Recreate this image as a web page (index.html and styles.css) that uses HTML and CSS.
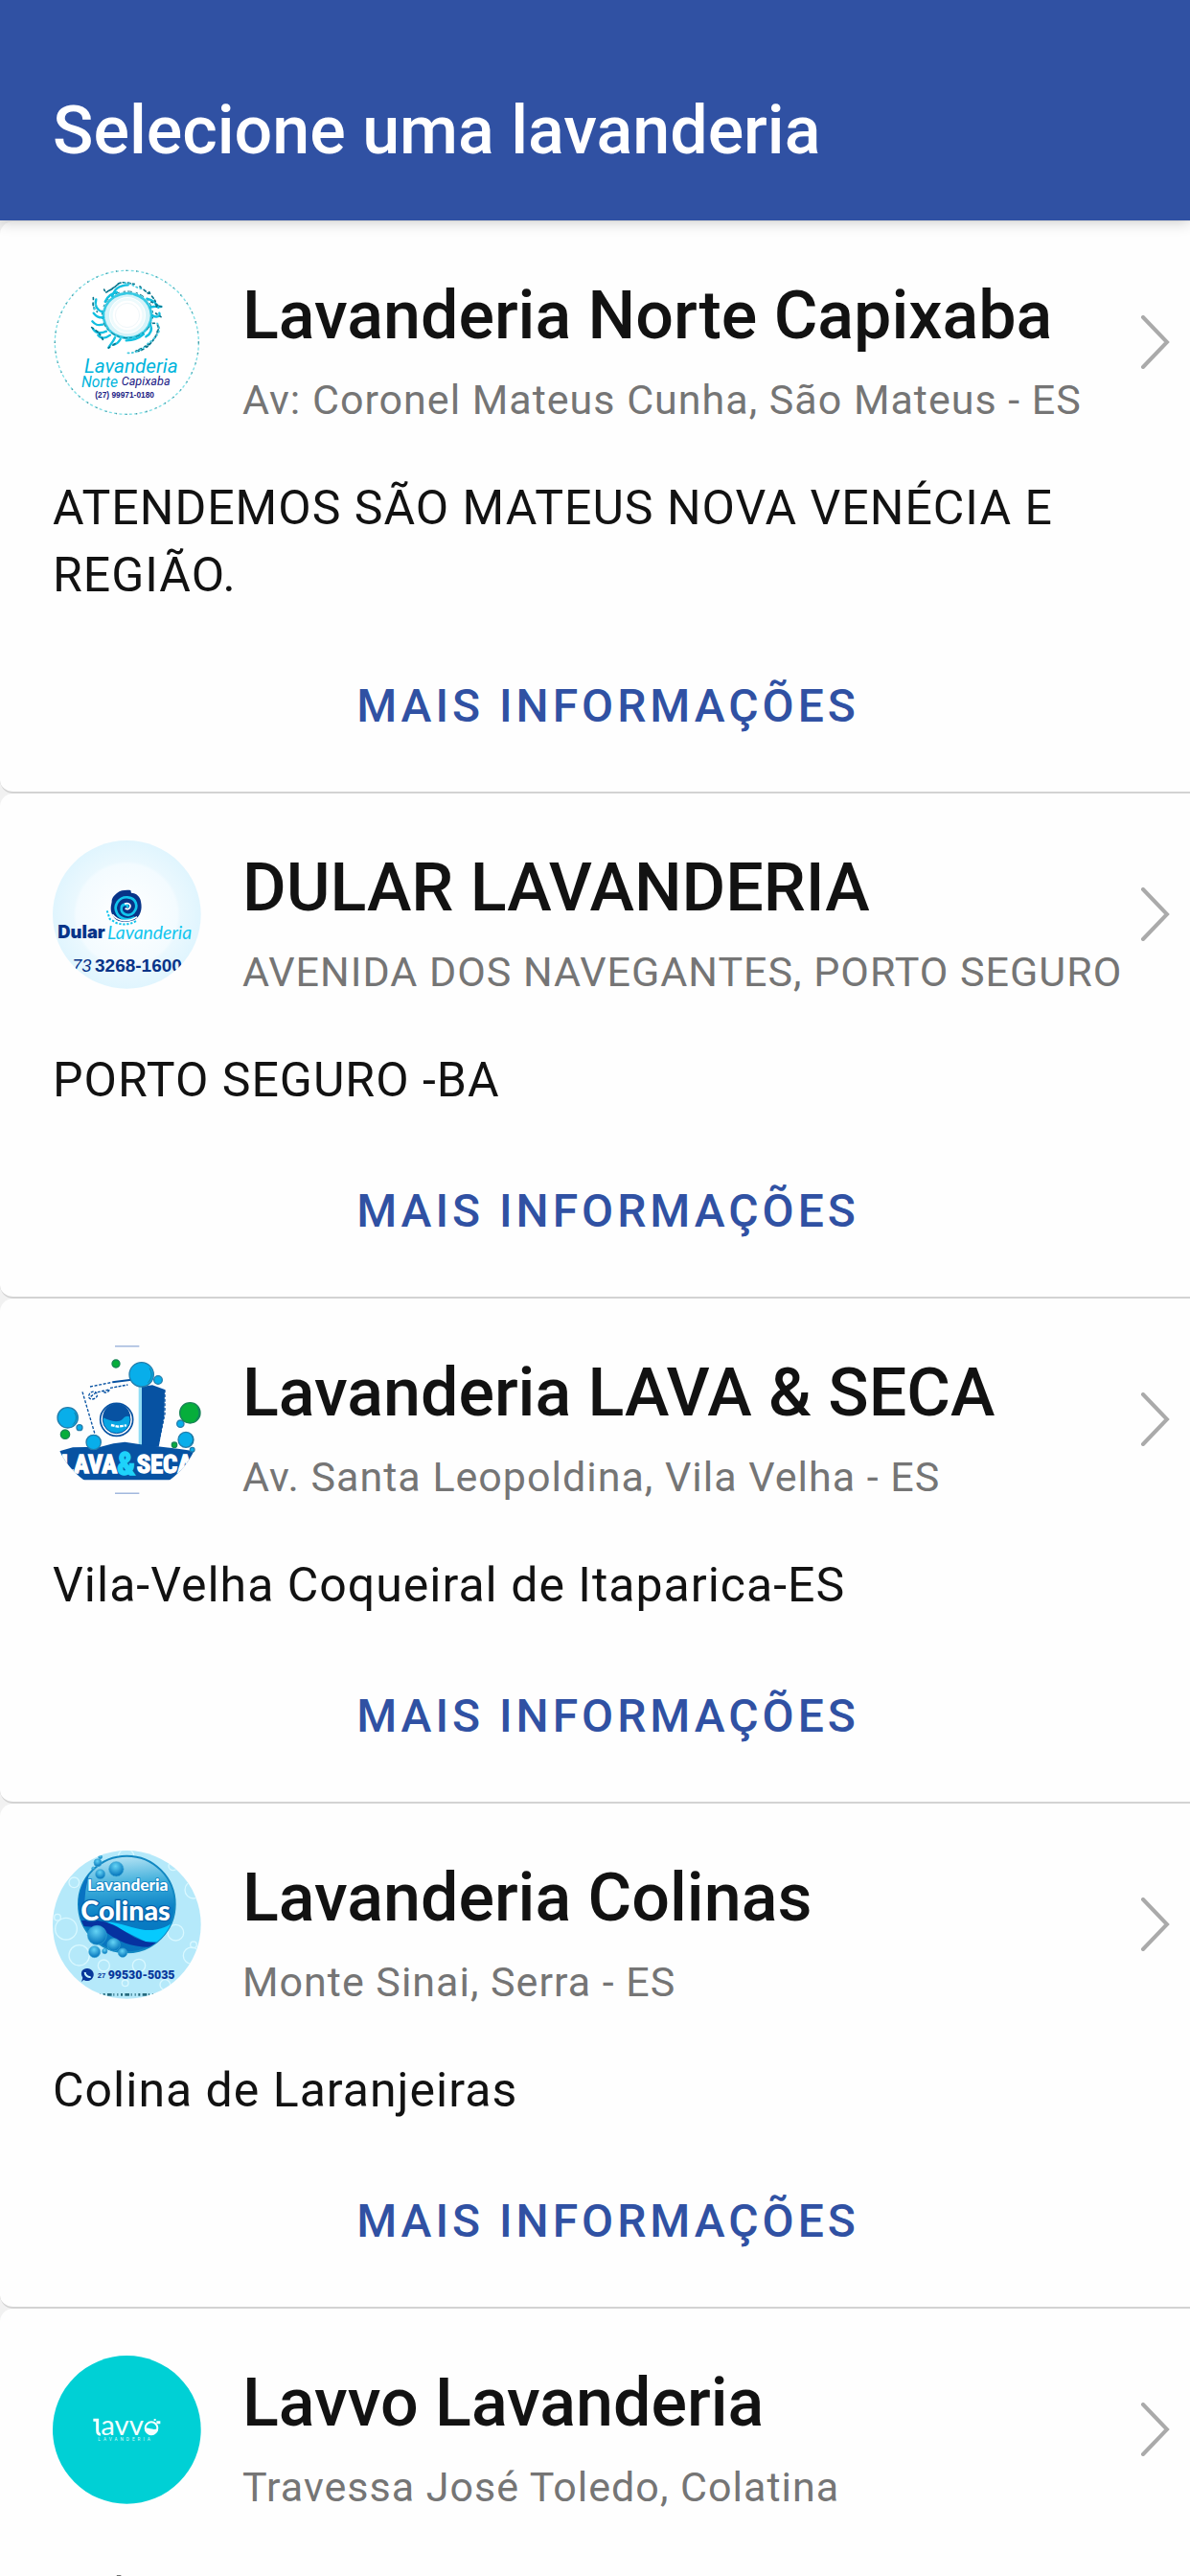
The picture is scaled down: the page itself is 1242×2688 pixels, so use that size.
FILE: index.html
```html
<!DOCTYPE html>
<html lang="pt-BR">
<head>
  <meta charset="UTF-8">
  <meta name="viewport" content="width=device-width, initial-scale=1.0">
  <title>Selecione uma lavanderia</title>
  <link rel="stylesheet" href="styles.css">
</head>
<body>
<header class="topbar">
  <h1>Selecione uma lavanderia</h1>
</header>

<main class="list">

  <article class="card">
    <a class="row" href="#norte-capixaba">
      <svg class="avatar" viewBox="45 33 465 465" aria-hidden="true">
        <circle cx="277" cy="265" r="225" fill="#fff" stroke="#7fdfe6" stroke-width="4" stroke-dasharray="9 7"/>
        <circle cx="277" cy="265" r="225" fill="none" stroke="#4b9aa5" stroke-width="4" stroke-dasharray="4 28"/>
        <g fill="none" stroke-linecap="round">
          <circle cx="279" cy="180" r="64" stroke="#d5f3f9" stroke-width="14"/>
          <circle cx="279" cy="180" r="50" stroke="#eefafc" stroke-width="8"/>
          <circle cx="279" cy="180" r="38" stroke="#f0f7fa" stroke-width="3"/>
          <ellipse cx="279" cy="181" rx="75" ry="70" stroke="#35c9e3" stroke-width="8" stroke-dasharray="34 3 18 5"/>
          <ellipse cx="279" cy="178" rx="80" ry="73" stroke="#087b91" stroke-width="3" stroke-dasharray="12 14 5 9"/>
          <path stroke="#11bfe0" stroke-width="7" d="M232 121c5-24 25-35 49-36M209 137c9-18 20-26 37-29M201 170c-20-8-25-22-20-40M204 187c-17 2-24-5-31-14M202 209c-17 3-24 1-33-10M213 230c-20 9-33 6-42-8M225 242c-17 13-29 11-38 0M240 250c-8 18-15 20-20 31M257 255c-8 14-14 15-21 17M330 239c-18 16-33 20-55 20M351 209c8 20 0 30-14 38M357 181c14 7 26 3 22-8M340 128c19 5 30 12 36 28M352 155c14-5 19-2 33-2"/>
          <path stroke="#08758d" stroke-width="5" stroke-dasharray="5 11 8 7" d="M212 108c22-10 32-20 38-27 21-10 41 3 55 1M206 99c5 17 24-3 45-17M172 125c2 15-8 24 12 44M167 218c15 11 24 14 35 38M347 107c9 19 22 21 23 47M353 138c11 4 15 10 33 15M359 205c21-3 21 23 7 42-12 21-28 40-54 45M373 229c-6 37-38 48-77 68M368 174l16 11M220 282l25-16M318 90l27 22"/>
          <path stroke="#43c9df" stroke-width="5" stroke-dasharray="4 9" d="M270 79c22-1 32 15 54 18M372 205c20 24-8 49-30 64M280 298c25 0 40-8 57-22M180 145l-8 22"/>
        </g>
        <text class="logo-slim" x="144" y="361" font-size="62" fill="#00b4dc">Lavanderia</text>
        <text class="logo-slim" x="135" y="404" font-size="47" fill="#00b4dc">Norte</text>
        <text class="logo-slim" x="260" y="398" font-size="38" fill="#1c1b85">Capixaba</text>
        <text class="logo-bold" x="178" y="439" font-size="25" fill="#1c1b85">(27) 99971-0180</text>
      </svg>
      <div class="info">
        <h2>Lavanderia Norte Capixaba</h2>
        <p>Av: Coronel Mateus Cunha, São Mateus - ES</p>
      </div>
      <svg class="chevron" viewBox="0 0 32 56" aria-hidden="true"><path d="M3 2l25 26L3 54"/></svg>
    </a>
    <p class="about">ATENDEMOS SÃO MATEUS NOVA VENÉCIA E REGIÃO.</p>
    <button class="more" type="button">MAIS INFORMAÇÕES</button>
  </article>

  <article class="card">
    <a class="row" href="#dular">
      <svg class="avatar" viewBox="45 50 465 465" aria-hidden="true">
        <defs>
          <radialGradient id="dular-bg" cx=".5" cy=".5" r=".5">
            <stop offset="0" stop-color="#fff"/>
            <stop offset=".68" stop-color="#f3fbff"/>
            <stop offset=".72" stop-color="#eaf8fe"/>
            <stop offset="1" stop-color="#e0f5fe"/>
          </radialGradient>
          <clipPath id="dular-clip"><circle cx="277" cy="282" r="232"/></clipPath>
        </defs>
        <circle cx="277" cy="282" r="232" fill="url(#dular-bg)"/>
        <path fill="#083488" d="M246 215c13-10 28-10 43-9l2 8c16 1 28 11 30 27 6 26-3 47-20 58l-20 5c-25 4-44-5-51-25-6-18-1-29 0-37-1-11 7-19 16-27z"/>
        <path fill="none" stroke="#12c5ed" stroke-width="8" stroke-linecap="round" d="M280 258c-2-11-19-10-20 4-2 19 24 29 38 14 17-19 8-46-17-48-29-3-47 26-35 49 9 19 34 25 53 15"/>
        <path fill="none" stroke="#fff" stroke-width="5" d="M270 249c9-5 19-1 18 8-1 7-10 11-16 5M232 282c18 24 53 24 77 7"/>
        <path fill="none" stroke="#12c5ed" stroke-width="6" stroke-dasharray="7 5" d="M215 270l9 26 20 12c22 8 43 5 63-6"/>
        <text class="logo-black" x="61" y="357" font-size="55" fill="#083488">Dular</text>
        <text class="logo-script" x="216" y="360" font-size="58" fill="#12c5ed">Lavanderia</text>
        <g clip-path="url(#dular-clip)" fill="#083488">
          <text class="logo-italic" x="106" y="460" font-size="54">73</text>
          <text class="logo-bold" x="177" y="460" font-size="57">3268-1600</text>
        </g>
      </svg>
      <div class="info">
        <h2>DULAR LAVANDERIA</h2>
        <p>AVENIDA DOS NAVEGANTES, PORTO SEGURO</p>
      </div>
      <svg class="chevron" viewBox="0 0 32 56" aria-hidden="true"><path d="M3 2l25 26L3 54"/></svg>
    </a>
    <p class="about">PORTO SEGURO -BA</p>
    <button class="more" type="button">MAIS INFORMAÇÕES</button>
  </article>

  <article class="card">
    <a class="row" href="#lava-seca">
      <svg class="avatar" viewBox="45 41 465 465" aria-hidden="true">
        <defs><clipPath id="seca-clip"><circle cx="277" cy="273" r="232"/></clipPath></defs>
        <path stroke="#a2b8dd" stroke-width="5" d="M240 43h76M240 504h76"/>
        <path fill="#0752a2" d="M324 170l33-5 39 14-2 84-17 95h-53z"/>
        <path fill="#8fdcf4" d="M314 168h10v186h-10z"/>
        <path fill="none" stroke="#0752a2" stroke-width="4" stroke-dasharray="9 5" d="M162 170l70-14M138 186l52 176M396 180v75l-20 95"/>
        <path fill="none" stroke="#0752a2" stroke-width="6" d="M232 156l60-8"/>
        <path fill="none" stroke="#0752a2" stroke-width="4" stroke-dasharray="9 4" d="M158 199c2-16 22-18 26-6s-17 22-25 12l22-17 42-9c-5 12-18 12-22 2M225 174l55-10"/>
        <circle cx="245" cy="273" r="51" fill="#fff" stroke="#0752a2" stroke-width="5"/>
        <circle cx="245" cy="273" r="43" fill="#08a6e3" stroke="#0752a2" stroke-width="3"/>
        <path fill="#0752a2" d="M202 266a43 43 0 0 1 86 0c-8-8-17-3-24 5-17 15-43 4-62-5z"/>
        <path fill="none" stroke="#fff" stroke-width="7" stroke-dasharray="11 3" d="M228 290l21 5 27-4"/>
        <g clip-path="url(#seca-clip)">
          <path fill="#0752a2" d="M66 372l42-12 87-2 40-10 36-5 50 8 116 13 52 8-10 36-55 54H125l-35-40z"/>
          <g font-size="80" class="logo-slab">
            <text x="72" y="440" fill="#fff" stroke="#fff">LAVA</text>
            <text x="308" y="440" fill="#fff" stroke="#fff">SECA</text>
            <text x="246" y="446" font-size="100" fill="#1ed2fa" stroke="#1ed2fa">&amp;</text>
          </g>
        </g>
        <g fill="#08aeea" stroke="#237dac" stroke-width="4">
          <circle cx="323" cy="132" r="38"/><circle cx="375" cy="149" r="13"/>
          <circle cx="92" cy="267" r="32"/><circle cx="129" cy="298" r="9"/>
          <circle cx="173" cy="344" r="23"/><circle cx="462" cy="336" r="24"/>
          <circle cx="445" cy="286" r="11"/><circle cx="482" cy="367" r="7"/>
        </g>
        <g fill="#06ae3b" stroke="#188556" stroke-width="4">
          <circle cx="243" cy="98" r="12"/><circle cx="84" cy="319" r="14"/>
          <circle cx="475" cy="252" r="32"/><circle cx="426" cy="352" r="8"/>
        </g>
        <path fill="none" stroke="#17657e" stroke-width="2" d="M348 112c10 16 8 34-5 45M113 251c9 13 6 27-5 38M498 235c9 16 7 28-5 39M480 322c7 13 5 22-5 29"/>
      </svg>
      <div class="info">
        <h2>Lavanderia LAVA &amp; SECA</h2>
        <p>Av. Santa Leopoldina, Vila Velha - ES</p>
      </div>
      <svg class="chevron" viewBox="0 0 32 56" aria-hidden="true"><path d="M3 2l25 26L3 54"/></svg>
    </a>
    <p class="about">Vila-Velha Coqueiral de Itaparica-ES</p>
    <button class="more" type="button">MAIS INFORMAÇÕES</button>
  </article>

  <article class="card">
    <a class="row" href="#colinas">
      <svg class="avatar" viewBox="45 45 465 465" aria-hidden="true">
        <defs>
          <linearGradient id="colinas-ball" x1=".4" y1="0" x2=".5" y2="1">
            <stop offset="0" stop-color="#b9e5f5"/>
            <stop offset=".3" stop-color="#3eaedb"/>
            <stop offset=".6" stop-color="#087fc5"/>
            <stop offset="1" stop-color="#0872bd"/>
          </linearGradient>
          <radialGradient id="colinas-bubble" cx=".45" cy=".3" r=".65">
            <stop offset="0" stop-color="#65d4f5"/>
            <stop offset="1" stop-color="#0878be"/>
          </radialGradient>
          <clipPath id="colinas-clip"><circle cx="277" cy="213" r="151"/></clipPath>
          <clipPath id="colinas-round"><circle cx="277" cy="277" r="232"/></clipPath>
        </defs>
        <circle cx="277" cy="277" r="232" fill="#b5e9fa"/>
        <g clip-path="url(#colinas-round)">
          <g fill="none" stroke="#d9f8ff" stroke-width="4">
            <circle cx="87" cy="290" r="34"/><circle cx="128" cy="373" r="32"/>
            <circle cx="430" cy="302" r="25"/><circle cx="486" cy="168" r="27"/>
            <circle cx="480" cy="374" r="26"/><circle cx="275" cy="65" r="25"/>
            <circle cx="205" cy="405" r="18"/><circle cx="397" cy="465" r="16"/>
            <circle cx="112" cy="145" r="16"/><circle cx="315" cy="405" r="20"/>
            <circle cx="486" cy="340" r="10"/><circle cx="60" cy="254" r="10"/>
            <circle cx="422" cy="93" r="14"/><circle cx="272" cy="460" r="10"/>
          </g>
          <circle cx="277" cy="213" r="151" fill="url(#colinas-ball)" stroke="#1288c2" stroke-width="6"/>
          <g clip-path="url(#colinas-clip)">
            <path fill="#0872c2" d="M120 130c18-35 30-44 46-50l-18 90-10 105-18-5z"/>
            <path fill="#06cafe" d="M210 268c45 1 92 24 124 26 50 3 82-16 100-36l-30 74H340z"/>
            <path fill="#0632a0" d="M120 266c52-7 93-4 139 25 47 30 67 43 112 41l-12 15c-64 3-110-18-143-43-31-22-58-22-96-22z"/>
          </g>
          <g fill="url(#colinas-bubble)" stroke="#3ba7d4" stroke-width="2">
            <circle cx="244" cy="103" r="23"/><circle cx="194" cy="119" r="15"/>
            <circle cx="186" cy="83" r="12"/><circle cx="194" cy="65" r="6"/><circle cx="172" cy="101" r="5"/>
            <circle cx="184" cy="310" r="30"/><circle cx="236" cy="340" r="20"/>
            <circle cx="176" cy="362" r="18"/><circle cx="264" cy="365" r="14"/><circle cx="208" cy="360" r="8"/>
          </g>
          <text class="logo-round" x="153" y="172" font-size="52" fill="#fff" stroke="#1384c3" stroke-width="5">Lavanderia</text>
          <text class="logo-round" x="133" y="263" font-size="86" fill="#fff" stroke="#0765ad" stroke-width="8">Colinas</text>
          <path fill="#08379a" d="M135 456l4-13c-12-20 4-31 15-29 26 3 25 35 2 39-7 1-11-2-14-3z"/>
          <path fill="none" stroke="#c9f5ff" stroke-width="6" d="M146 426c0 9 10 17 18 15"/>
          <text class="logo-bold" x="185" y="445" font-size="23" fill="#08379a">27</text>
          <text class="logo-heavy" x="218" y="446" font-size="37" fill="#08379a">99530-5035</text>
          <path stroke="#276b7f" stroke-width="8" stroke-dasharray="3 8 6 7 14 5 3 9" d="M192 496h178"/>
        </g>
      </svg>
      <div class="info">
        <h2>Lavanderia Colinas</h2>
        <p>Monte Sinai, Serra - ES</p>
      </div>
      <svg class="chevron" viewBox="0 0 32 56" aria-hidden="true"><path d="M3 2l25 26L3 54"/></svg>
    </a>
    <p class="about">Colina de Laranjeiras</p>
    <button class="more" type="button">MAIS INFORMAÇÕES</button>
  </article>

  <article class="card">
    <a class="row" href="#lavvo">
      <svg class="avatar" viewBox="45 50 465 465" aria-hidden="true">
        <circle cx="277" cy="282" r="232" fill="#00d0d5"/>
        <path fill="none" stroke="#f2ffff" stroke-width="9" d="M172 252h13v32c0 9 3 13 10 13"/>
        <text class="logo-light" x="196" y="299" font-size="88" fill="#f2ffff">avv</text>
        <circle cx="354" cy="277" r="19" fill="none" stroke="#f2ffff" stroke-width="6"/>
        <path fill="#f2ffff" d="M334 278c12-5 23 8 40 0 0 27-38 31-40 0zM370 255h12v9h-12zM362 248h6v6h-6z"/>
        <text class="logo-tiny" x="187" y="318" font-size="14" fill="#d6f9fa">LAVANDERIA</text>
      </svg>
      <div class="info">
        <h2>Lavvo Lavanderia</h2>
        <p>Travessa José Toledo, Colatina</p>
      </div>
      <svg class="chevron" viewBox="0 0 32 56" aria-hidden="true"><path d="M3 2l25 26L3 54"/></svg>
    </a>
    <p class="about">Colatina - ES</p>
    <button class="more" type="button">MAIS INFORMAÇÕES</button>
  </article>

</main>
</body>
</html>
```

FILE: styles.css
```css
* {
  box-sizing: border-box;
}
html {
  height: 100%;
}
body {
  display: flex;
  flex-direction: column;
  height: 100%;
  margin: 0;
  overflow: hidden;
  background: #f1f1f1;
  color: #121212;
  font-family: Roboto, "Liberation Sans", sans-serif;
}
h1, h2, p {
  margin: 0;
}

.topbar {
  flex: none;
  position: relative;
  padding: 91px 55px 49px;
  background: #3051a3;
  color: #fff;
  box-shadow: 0 2px 14px rgba(0,0,0,.2);
}
.topbar h1 {
  font-size: 70px;
  font-weight: 500;
  line-height: 90px;
}

.list {
  flex: 1;
  min-height: 0;
  padding-top: 1px;
  overflow-y: auto;
  scrollbar-width: none;
}

.card {
  padding: 49px 28px 28px 55px;
  background: #fefefe;
  border-bottom: 2px solid #d3d3d3;
  border-radius: 14px 0 0 14px;
}
.row {
  display: flex;
  align-items: flex-start;
  margin-bottom: 48px;
  color: inherit;
  text-decoration: none;
}
.avatar {
  flex: none;
  width: 155px;
  height: 155px;
  margin-right: 43px;
}
.info {
  flex: 1;
  min-width: 0;
  padding-top: 9px;
  white-space: nowrap;
}
.info h2 {
  margin-bottom: 18px;
  font-size: 70px;
  font-weight: 500;
  line-height: 80px;
}
.info p {
  color: #757575;
  font-size: 43px;
  letter-spacing: 1px;
  line-height: 60px;
}
.chevron {
  flex: none;
  width: 32px;
  height: 56px;
  margin-top: 49px;
  margin-right: -8px;
  fill: none;
  stroke: #aaa;
  stroke-width: 4;
  stroke-linecap: round;
}
.about {
  font-size: 50px;
  letter-spacing: 1px;
  line-height: 70px;
}
.more {
  display: block;
  height: 124px;
  margin: 39px auto 0;
  padding: 0 28px;
  border: 0;
  background: none;
  color: #3051a3;
  font-family: inherit;
  font-size: 48px;
  font-weight: 500;
  letter-spacing: 4px;
}

/* lettering inside the logos */
.logo-slim {
  font-family: Roboto, sans-serif;
  font-style: italic;
}
.logo-heavy {
  font-family: Roboto, sans-serif;
  font-weight: 900;
}
.logo-bold {
  font-family: "Liberation Sans", sans-serif;
  font-weight: 700;
}
.logo-italic {
  font-family: "Liberation Sans", sans-serif;
  font-style: italic;
}
.logo-black {
  font-family: Inter, sans-serif;
  font-weight: 900;
}
.logo-script {
  font-family: Lato, sans-serif;
  font-style: italic;
}
.logo-slab {
  font-family: "Liberation Sans Narrow", "Roboto Condensed", Roboto, sans-serif;
  font-weight: 700;
  stroke-width: 4;
}
.logo-round {
  font-family: Lato, sans-serif;
  font-weight: 900;
  paint-order: stroke;
}
.logo-light {
  font-family: Lato, sans-serif;
}
.logo-tiny {
  font-family: Roboto, sans-serif;
  letter-spacing: 9px;
}
```
